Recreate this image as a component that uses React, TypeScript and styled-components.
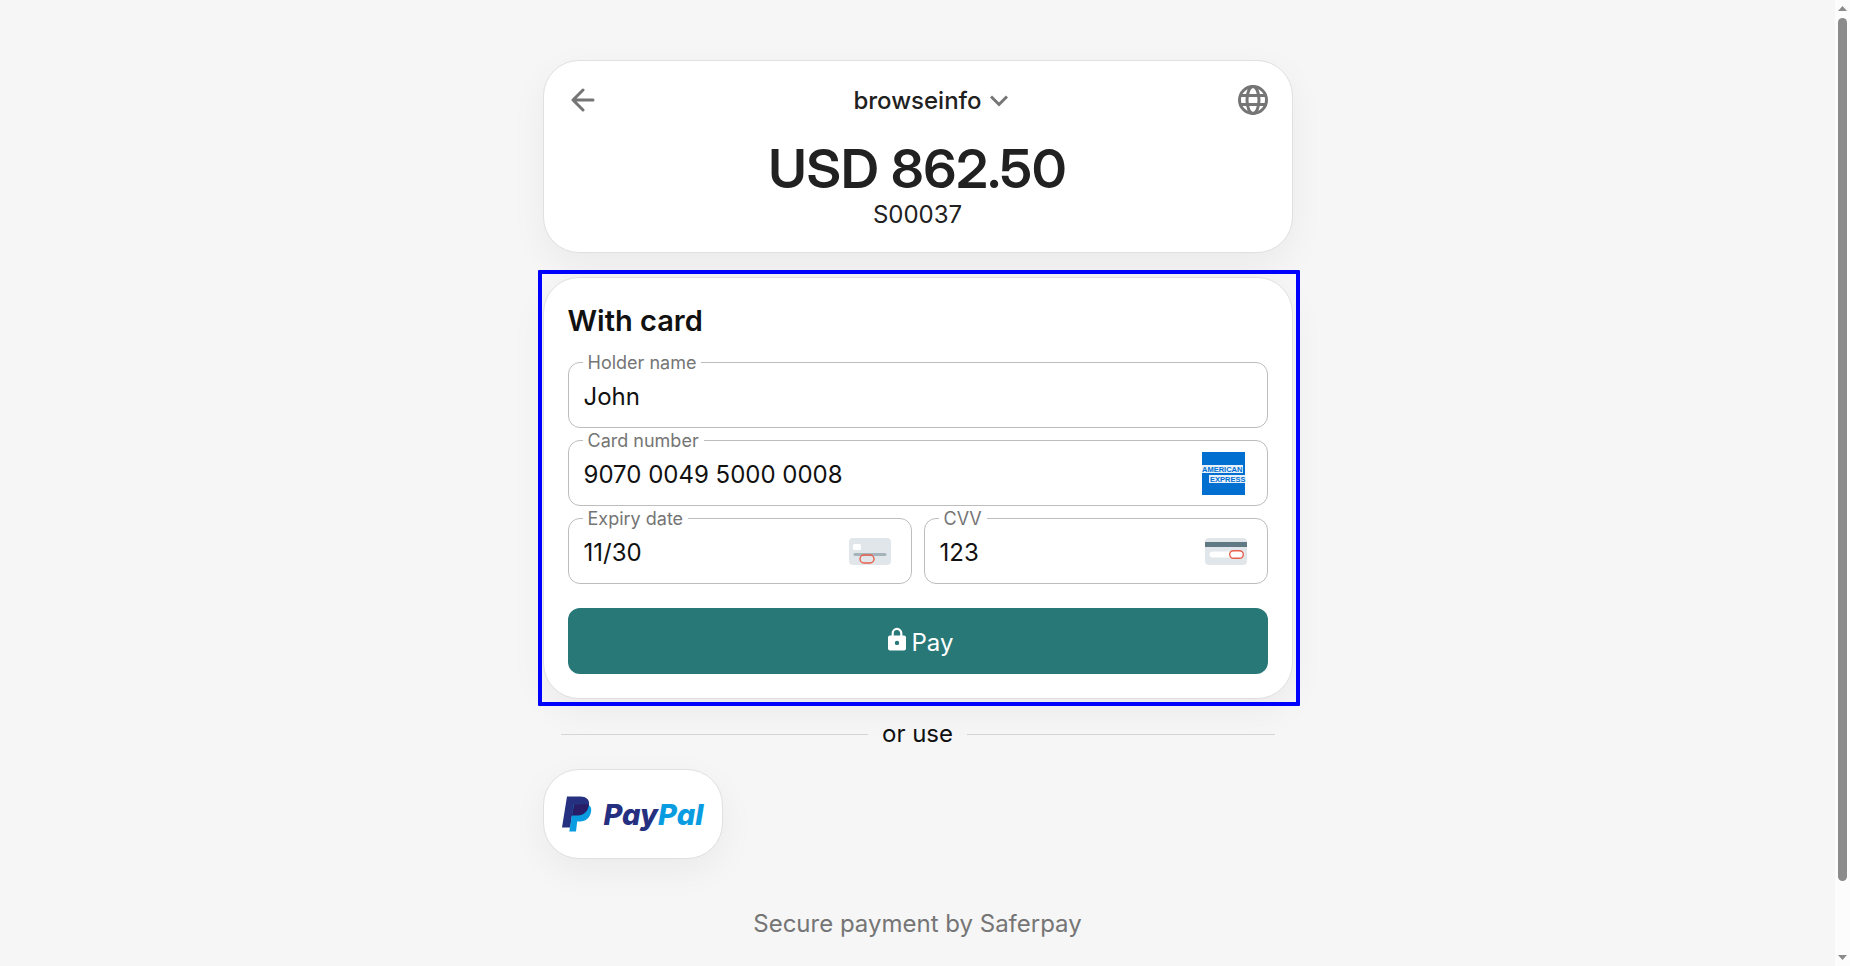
import React from "react";
import styled, { createGlobalStyle } from "styled-components";

const Global = createGlobalStyle`
  *, *::before, *::after { box-sizing: border-box; }
  body {
    margin: 0;
    background: #f6f6f6;
    color: #111;
    font: 400 24px/30px Inter, "Liberation Sans", sans-serif;
  }
  button, input { font: inherit; color: inherit; }
`;

const Window = styled.div`
  display: flex;
  height: 100vh;
  overflow: hidden;
`;

const Page = styled.main`
  flex: 1;
  display: flex;
  flex-direction: column;
  align-items: center;
  padding: 60px 24px 0;
`;

const Column = styled.div`
  width: 100%;
  max-width: 750px;
  display: flex;
  flex-direction: column;
`;

const Card = styled.section`
  background: #fff;
  border: 1px solid #e0e0e0;
  border-radius: 36px;
  box-shadow: 0 12px 36px rgba(0, 0, 0, 0.05);
  padding: 24px;
`;

const Summary = styled(Card)`
  margin-bottom: 24px;
  padding: 15px 24px 22px;
  text-align: center;
`;

const TopBar = styled.header`
  display: grid;
  grid-template-columns: 48px 1fr 48px;
  align-items: center;
  height: 48px;
`;

const PlainButton = styled.button`
  display: flex;
  align-items: center;
  justify-content: center;
  gap: 8px;
  padding: 0;
  border: 0;
  background: none;
`;

const BackButton = styled(PlainButton)`
  justify-content: flex-start;
  padding-left: 3px;
`;

const LanguageButton = styled(PlainButton)`
  justify-content: flex-end;
`;

const MerchantButton = styled(PlainButton)`
  color: #212121;
  font-weight: 500;
  padding: 2px 0 0 26px;
`;

const Amount = styled.h1`
  margin: 14px 0 0;
  color: #212121;
  font-family: "Inter Display", Inter, "Liberation Sans", sans-serif;
  font-size: 54px;
  line-height: 62px;
  font-weight: 600;
`;

const Order = styled.p`
  margin: 0;
  color: #212121;
`;

const Highlighted = styled.div`
  position: relative;
  &::after {
    content: "";
    position: absolute;
    inset: -7px -7px -7px -5px;
    border: 4px solid #00f;
    border-radius: 1px;
    pointer-events: none;
  }
`;

const CardForm = styled.form`
  display: flex;
  flex-direction: column;
  gap: 12px;
`;

const Heading = styled.h2`
  margin: 0;
  padding: 1px 0 11px;
  font-size: 29px;
  line-height: 36px;
  font-weight: 600;
`;

const FieldRow = styled.div`
  display: grid;
  grid-template-columns: repeat(2, minmax(0, 1fr));
  gap: 12px;
`;

const FieldBox = styled.div`
  position: relative;
  display: flex;
  align-items: center;
  height: 66px;
  padding: 0 20px 0 15px;
  border: 1px solid #bdbdbd;
  border-radius: 12px;
`;

const FieldLabel = styled.label`
  position: absolute;
  top: -12px;
  left: 14px;
  padding: 0 5px;
  background: #fff;
  color: #757575;
  font-size: 18px;
  line-height: 24px;
`;

const FieldInput = styled.input`
  flex: 1;
  min-width: 0;
  padding: 3px 0 0;
  border: 0;
  outline: 0;
  background: none;
`;

const PayButton = styled(PlainButton)`
  gap: 6px;
  height: 66px;
  margin-top: 12px;
  padding: 3px 0 0 6px;
  border-radius: 12px;
  background: #287877;
  color: #fff;
`;

const LockSlot = styled.span`
  display: flex;
  padding-bottom: 8px;
`;

const Divider = styled.div`
  display: flex;
  align-items: center;
  gap: 14px;
  height: 30px;
  margin: 20px 18px;
  &::before, &::after {
    content: "";
    flex: 1;
    border-top: 1px solid #d6d6d6;
  }
`;

const WalletButton = styled.button`
  display: flex;
  align-items: center;
  gap: 12px;
  align-self: flex-start;
  width: 180px;
  height: 90px;
  padding: 0 18px;
  background: #fff;
  border: 1px solid #e0e0e0;
  border-radius: 36px;
  box-shadow: 0 12px 36px rgba(0, 0, 0, 0.05);
`;

const Wordmark = styled.span`
  padding-top: 2px;
  color: #253080;
  font: italic 800 29px/36px Inter, "Liberation Sans", sans-serif;
  font-feature-settings: "cv11";
`;

const WordmarkTail = styled.span`
  color: #0a9ce0;
`;

const Footer = styled.footer`
  margin-top: 50px;
  color: #757575;
  text-align: center;
`;

const ScrollTrack = styled.div`
  display: flex;
  flex-direction: column;
  align-items: center;
  justify-content: space-between;
  width: 15px;
  padding: 6px 0;
  background: #fcfcfc;
`;

const ScrollThumb = styled.div`
  flex: 0 0 calc(90% + 4px);
  width: 9px;
  margin: 7px 0 auto;
  border-radius: 5px;
  background: #8b8b8b;
`;

const BackIcon = () => (
  <svg width="24" height="24" viewBox="0 0 24 24" fill="none" stroke="#757575" strokeWidth="3" strokeLinecap="round" strokeLinejoin="round">
    <path d="M22 12H2.2M12 2 2 12l10 10" />
  </svg>
);

const ChevronIcon = () => (
  <svg width="18" height="12" viewBox="0 0 18 12" fill="none" stroke="#757575" strokeWidth="3">
    <path d="M1 1.5 9 9.5l8-8" />
  </svg>
);

const GlobeIcon = () => (
  <svg width="30" height="30" viewBox="0 0 30 30" fill="none" stroke="#757575" strokeWidth="3">
    <circle cx="15" cy="15" r="13.5" />
    <ellipse cx="15" cy="15" rx="6" ry="13.5" />
    <path d="M2 10.5h26M2 19.5h26" />
  </svg>
);

const LockIcon = () => (
  <svg width="18" height="24" viewBox="0 0 18 24">
    <path d="M4.7 9V6.2a4.3 4.3 0 0 1 8.6 0V9" fill="none" stroke="#fff" strokeWidth="2.2" />
    <path fillRule="evenodd" fill="#fff" d="M2 8.5h14a2 2 0 0 1 2 2v11a2 2 0 0 1-2 2H2a2 2 0 0 1-2-2v-11a2 2 0 0 1 2-2zm7 5.2a2.2 2.2 0 1 0 0 4.4 2.2 2.2 0 0 0 0-4.4z" />
  </svg>
);

const AmexLogo = () => (
  <svg width="45" height="43" viewBox="0 0 45 43" role="img" aria-label="American Express">
    <rect width="43" height="43" fill="#016fd0" />
    <rect y="13" width="41" height="8" fill="#e6f1fa" />
    <rect x="7" y="23" width="36" height="8" fill="#e6f1fa" />
    <g fontFamily="Liberation Sans, sans-serif" fontWeight="700" fontSize="7.5" fill="#016fd0">
      <text x="0" y="19.7">AMERICAN</text>
      <text x="8" y="29.7">EXPRESS</text>
    </g>
  </svg>
);

const ExpiryIcon = () => (
  <svg width="42" height="27" viewBox="0 0 42 27">
    <rect width="42" height="27" rx="4" fill="#e0e6e9" />
    <rect x="4" y="6" width="8" height="6" rx="1.5" fill="#fff" />
    <rect x="4.5" y="15" width="33" height="3" rx="1.5" fill="#a5b3bb" />
    <rect x="11" y="17" width="14" height="8" rx="4" fill="none" stroke="#e8604c" strokeWidth="1.4" />
  </svg>
);

const CvvIcon = () => (
  <svg width="42" height="27" viewBox="0 0 42 27">
    <rect width="42" height="27" rx="4" fill="#e0e6e9" />
    <rect y="4" width="42" height="5" fill="#607985" />
    <rect x="4.5" y="13.5" width="33" height="6" rx="3" fill="#fff" />
    <rect x="24.7" y="12.7" width="13.6" height="7.6" rx="3.8" fill="#fff" stroke="#e8604c" strokeWidth="1.4" />
  </svg>
);

const PayPalMark = () => (
  <svg width="30" height="36" viewBox="0 0 30 36" aria-hidden="true">
    <path fill="#253080" d="M5 .6h13.5c5.5 0 9.3 3 8.5 8.2-.9 6-5.3 10.7-11.5 10.7H10L8.3 31.5H0z" />
    <path fill="#0a9ce0" d="M26.9 9.2c1.9 1.2 2.7 3.5 2.2 6.3-1.1 6.3-5 9.9-11.2 9.9h-2.7L14 35.5H7.3L11.7 8.5z" />
    <path fill="#281d66" d="M12 8.2h14.9c-.2 6.4-5.1 11.3-11.4 11.3H9.9z" />
  </svg>
);

type FieldProps = { id: string; label: string; value: string; icon?: React.ReactNode };

const Field = ({ id, label, value, icon }: FieldProps) => (
  <FieldBox>
    <FieldLabel htmlFor={id}>{label}</FieldLabel>
    <FieldInput id={id} type="text" defaultValue={value} />
    {icon}
  </FieldBox>
);

export default function App() {
  return (
    <Window>
      <Global />
      <Page>
        <Column>
          <Summary>
            <TopBar>
              <BackButton type="button" aria-label="Back"><BackIcon /></BackButton>
              <MerchantButton type="button">browseinfo<ChevronIcon /></MerchantButton>
              <LanguageButton type="button" aria-label="Language"><GlobeIcon /></LanguageButton>
            </TopBar>
            <Amount>USD 862.50</Amount>
            <Order>S00037</Order>
          </Summary>
          <Highlighted>
            <Card>
              <CardForm onSubmit={(e) => e.preventDefault()}>
                <Heading>With card</Heading>
                <Field id="holder" label="Holder name" value="John" />
                <Field id="number" label="Card number" value="9070 0049 5000 0008" icon={<AmexLogo />} />
                <FieldRow>
                  <Field id="expiry" label="Expiry date" value="11/30" icon={<ExpiryIcon />} />
                  <Field id="cvv" label="CVV" value="123" icon={<CvvIcon />} />
                </FieldRow>
                <PayButton type="submit"><LockSlot><LockIcon /></LockSlot>Pay</PayButton>
              </CardForm>
            </Card>
          </Highlighted>
          <Divider>or use</Divider>
          <WalletButton type="button">
            <PayPalMark />
            <Wordmark>Pay<WordmarkTail>Pal</WordmarkTail></Wordmark>
          </WalletButton>
          <Footer>Secure payment by Saferpay</Footer>
        </Column>
      </Page>
      <ScrollTrack aria-hidden="true">
        <svg width="9" height="5" viewBox="0 0 9 5"><path d="M0 5 4.5 0 9 5z" fill="#8b8b8b" /></svg>
        <ScrollThumb />
        <svg width="9" height="5" viewBox="0 0 9 5"><path d="M0 0 4.5 5 9 0z" fill="#8b8b8b" /></svg>
      </ScrollTrack>
    </Window>
  );
}
